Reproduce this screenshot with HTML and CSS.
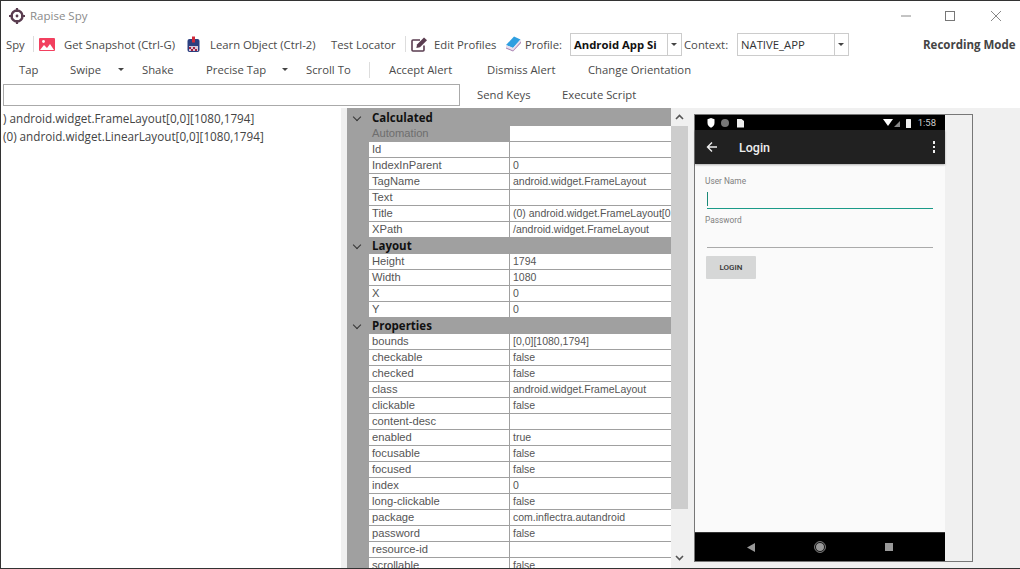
FILE: index.html
```html
<!DOCTYPE html>
<html lang="en">
<head>
    <meta charset="UTF-8">
    <meta name="viewport" content="width=device-width, initial-scale=1.0">
    <title>Rapise Spy</title>
    <link rel="stylesheet" href="styles.css">
</head>
<body>
    <div class="window">
        <div class="titlebar">
            <svg class="logo" width="18" height="18" viewBox="0 0 18 18">
                <circle cx="9" cy="9" r="5.5" fill="none" stroke="#5a3d50" stroke-width="2.4"/>
                <circle cx="9" cy="9" r="1.4" fill="#5a3d50"/>
                <path d="M9 1v4M9 13v4M1 9h4M13 9h4" stroke="#5a3d50" stroke-width="2.2"/>
            </svg>
            <span class="app-name">Rapise Spy</span>
            <div class="win-controls">
                <svg width="12" height="12" viewBox="0 0 12 12"><path d="M1 6h10" stroke="#888"/></svg>
                <svg class="win-max" width="12" height="12" viewBox="0 0 12 12"><rect x="1.5" y="1.5" width="9" height="9" fill="none" stroke="#777"/></svg>
                <svg class="win-close" width="12" height="12" viewBox="0 0 12 12"><path d="M1 1l10 10M11 1L1 11" stroke="#888"/></svg>
            </div>
        </div>

        <!-- Toolbar rows -->
        <div class="toolbar row-one">
            <span class="tb-first">Spy</span>
            <span class="sep sep-a"></span>
            <svg class="ic-snap" width="16" height="13" viewBox="0 0 16 13">
                <rect width="16" height="13" rx="1" fill="#f2405f"/>
                <path d="M1 12l4-5 3 3 3-4 4 6z" fill="#fff"/>
                <circle cx="4.5" cy="3.5" r="1.4" fill="#fff"/>
            </svg>
            <span class="lbl-snap">Get Snapshot (Ctrl-G)</span>
            <svg class="ic-learn" width="13" height="17" viewBox="0 0 13 17">
                <rect x="0.5" y="3" width="12" height="13" rx="2" fill="#2b3f80"/>
                <rect x="2" y="10" width="9" height="5" fill="#d8c8d8"/>
                <path d="M2 11h2v2H2zM6 11h2v2H6zM4 13h2v2H4zM8 13h2v2H8z" fill="#a02040"/>
                <rect x="5" y="0.5" width="3" height="6" fill="#d02a3a"/>
            </svg>
            <span class="lbl-learn">Learn Object (Ctrl-2)</span>
            <span class="lbl-locator">Test Locator</span>
            <span class="sep sep-b"></span>
            <svg class="ic-edit" width="17" height="15" viewBox="0 0 17 15">
                <path d="M13 8.5V13a1 1 0 0 1-1 1H2a1 1 0 0 1-1-1V4a1 1 0 0 1 1-1h7" fill="none" stroke="#5a3d50" stroke-width="1.6"/>
                <path d="M6 7.5l7-7 3 2.8-7 7-3.6.8z" fill="#5a3d50"/>
            </svg>
            <span class="lbl-edit">Edit Profiles</span>
            <svg class="ic-book" width="16" height="16" viewBox="0 0 16 16">
                <path d="M1 9l8-8.500 6.500 3L8 12z" fill="#2f9fe0"/>
                <path d="M1 9l7 3 7.500-8.500.5 2.500-8 9-7-3z" fill="#e8e0ee"/>
                <path d="M1 11.500l7 3 8-9V7l-8 8.500-7-3z" fill="#a880b0"/>
            </svg>
            <span class="lbl-profile">Profile:</span>
            <div class="combo combo-profile"><span class="combo-text">Android App Si</span><span class="combo-drop"></span></div>
            <span class="lbl-context">Context:</span>
            <div class="combo combo-context"><span class="combo-text">NATIVE_APP</span><span class="combo-drop"></span></div>
            <span class="lbl-mode">Recording Mode</span>
        </div>

        <div class="toolbar row-two">
            <span class="t-tap">Tap</span>
            <span class="t-swipe">Swipe</span>
            <span class="caret caret-swipe"></span>
            <span class="t-shake">Shake</span>
            <span class="t-precise">Precise Tap</span>
            <span class="caret caret-precise"></span>
            <span class="t-scroll">Scroll To</span>
            <span class="sep sep-c"></span>
            <span class="t-accept">Accept Alert</span>
            <span class="t-dismiss">Dismiss Alert</span>
            <span class="t-orient">Change Orientation</span>
        </div>

        <div class="toolbar row-three">
            <input class="keys-input" type="text">
            <span class="t-send">Send Keys</span>
            <span class="t-exec">Execute Script</span>
        </div>

        <div class="main">
            <div class="tree">
                <div>) android.widget.FrameLayout[0,0][1080,1794]</div>
                <div>(0) android.widget.LinearLayout[0,0][1080,1794]</div>
            </div>

            <div class="grid-wrap">
                <div class="grid">
                    <div class="group group-first"><span class="chev"></span>Calculated</div>
                    <div class="prop prop-sub"><span class="name">Automation</span><span class="value"></span></div>
                    <div class="prop"><span class="name">Id</span><span class="value"></span></div>
                    <div class="prop"><span class="name">IndexInParent</span><span class="value">0</span></div>
                    <div class="prop"><span class="name">TagName</span><span class="value">android.widget.FrameLayout</span></div>
                    <div class="prop"><span class="name">Text</span><span class="value"></span></div>
                    <div class="prop"><span class="name">Title</span><span class="value">(0) android.widget.FrameLayout[0</span></div>
                    <div class="prop"><span class="name">XPath</span><span class="value">/android.widget.FrameLayout</span></div>
                    <div class="group"><span class="chev"></span>Layout</div>
                    <div class="prop"><span class="name">Height</span><span class="value">1794</span></div>
                    <div class="prop"><span class="name">Width</span><span class="value">1080</span></div>
                    <div class="prop"><span class="name">X</span><span class="value">0</span></div>
                    <div class="prop"><span class="name">Y</span><span class="value">0</span></div>
                    <div class="group"><span class="chev"></span>Properties</div>
                    <div class="prop"><span class="name">bounds</span><span class="value">[0,0][1080,1794]</span></div>
                    <div class="prop"><span class="name">checkable</span><span class="value">false</span></div>
                    <div class="prop"><span class="name">checked</span><span class="value">false</span></div>
                    <div class="prop"><span class="name">class</span><span class="value">android.widget.FrameLayout</span></div>
                    <div class="prop"><span class="name">clickable</span><span class="value">false</span></div>
                    <div class="prop"><span class="name">content-desc</span><span class="value"></span></div>
                    <div class="prop"><span class="name">enabled</span><span class="value">true</span></div>
                    <div class="prop"><span class="name">focusable</span><span class="value">false</span></div>
                    <div class="prop"><span class="name">focused</span><span class="value">false</span></div>
                    <div class="prop"><span class="name">index</span><span class="value">0</span></div>
                    <div class="prop"><span class="name">long-clickable</span><span class="value">false</span></div>
                    <div class="prop"><span class="name">package</span><span class="value">com.inflectra.autandroid</span></div>
                    <div class="prop"><span class="name">password</span><span class="value">false</span></div>
                    <div class="prop"><span class="name">resource-id</span><span class="value"></span></div>
                    <div class="prop"><span class="name">scrollable</span><span class="value">false</span></div>
                </div>
                <div class="scrollbar">
                    <svg class="sb-arrow" width="17" height="18" viewBox="0 0 17 18"><path d="M5 11l3.500-3.500L12 11" fill="none" stroke="#555" stroke-width="1.6"/></svg>
                    <div class="sb-thumb"></div>
                    <svg class="sb-arrow" width="17" height="17" viewBox="0 0 17 17"><path d="M5 7l3.500 3.500L12 7" fill="none" stroke="#555" stroke-width="1.6"/></svg>
                </div>
            </div>

            <div class="preview">
                <div class="phone">
                    <div class="status">
                        <svg width="42" height="10" viewBox="0 0 42 10">
                            <path d="M4 0l3.500 1.200V5c0 2.500-1.800 4-3.500 4.800C2.300 9 .5 7.500.5 5V1.200z" fill="#fff"/>
                            <circle cx="18" cy="5" r="4" fill="#777"/>
                            <path d="M30 1h4.500L37 3v6.500h-7z" fill="#eee"/>
                        </svg>
                        <svg class="status-right" width="30" height="10" viewBox="0 0 30 10">
                            <path d="M0 1h10L5 8z" fill="#fff"/>
                            <path d="M11 9l6-6v6z" fill="#888"/>
                            <rect x="23" y="1" width="5" height="9" rx="0.5" fill="#eee"/>
                        </svg>
                        <span class="clock">1:58</span>
                    </div>
                    <div class="appbar">
                        <svg width="12" height="12" viewBox="0 0 12 12"><path d="M11 6H1.500M6 1.500L1.500 6 6 10.500" fill="none" stroke="#eee" stroke-width="1.400"/></svg>
                        <span class="appbar-title">Login</span>
                        <span class="more"><i></i><i></i><i></i></span>
                    </div>
                    <div class="screen">
                        <div class="field-label">User Name</div>
                        <div class="field field-active"><span class="cursor"></span></div>
                        <div class="field-label">Password</div>
                        <div class="field"></div>
                        <div class="login-btn">LOGIN</div>
                    </div>
                    <div class="navbar">
                        <svg width="8" height="9" viewBox="0 0 8 9"><path d="M8 0v9L0 4.500z" fill="#999"/></svg>
                        <svg width="12" height="12" viewBox="0 0 12 12"><circle cx="6" cy="6" r="5.400" fill="none" stroke="#888"/><circle cx="6" cy="6" r="4" fill="#999"/></svg>
                        <svg width="8" height="8" viewBox="0 0 8 8"><rect width="8" height="8" fill="#999"/></svg>
                    </div>
                </div>
                <div class="phone-rest"></div>
            </div>
        </div>
    </div>
</body>
</html>
```

FILE: styles.css
```css
* {
    box-sizing: border-box;
}
html, body {
    margin: 0;
    height: 100%;
    overflow: hidden;
}
body {
    font-family: "Open Sans", "Liberation Sans", sans-serif;
    font-size: 11.3px;
    color: #4a4a4a;
    background: #fff;
}
.window {
    width: 1020px;
    height: 569px;
    border: 1px solid #333;
    border-right: none;
    display: flex;
    flex-direction: column;
    overflow: hidden;
    background: #fff;
}

/* title bar */
.titlebar {
    height: 29px;
    flex: none;
    display: flex;
    align-items: center;
    padding: 0 0 0 7px;
}
.app-name {
    margin-left: 4px;
    color: #8a8a8a;
    font-size: 11.5px;
}
.win-controls {
    margin-left: auto;
    display: flex;
    align-items: center;
    padding-right: 18px;
}
.win-max {
    margin-left: 32px;
}
.win-close {
    margin-left: 34px;
}

/* toolbar */
.toolbar {
    flex: none;
    display: flex;
    align-items: center;
    white-space: nowrap;
}
.row-one {
    height: 28px;
}
.row-two {
    height: 23px;
}
.row-three {
    height: 27px;
}
.sep {
    width: 1px;
    height: 16px;
    background: #ddd;
}
.tb-first { margin-left: 5px; width: 19px; }
.sep-a { margin-left: 8px; }
.ic-snap { margin-left: 5px; }
.lbl-snap { margin-left: 9px; width: 111px; }
.ic-learn { margin-left: 12px; }
.lbl-learn { margin-left: 10px; width: 107px; }
.lbl-locator { margin-left: 14px; width: 65px; }
.sep-b { margin-left: 9px; }
.ic-edit { margin-left: 5px; }
.lbl-edit { margin-left: 6px; width: 62px; }
.ic-book { margin-left: 9px; }
.lbl-profile { margin-left: 4px; width: 36px; }
.combo {
    height: 23px;
    border: 1px solid #ccc;
    display: flex;
    align-items: center;
    width: 112px;
    background: #fff;
}
.combo-profile {
    margin-left: 9px;
    color: #111;
    font-weight: 700;
}
.combo-text {
    flex: 1;
    padding-left: 3px;
    overflow: hidden;
}
.combo-context .combo-text {
    color: #333;
}
.combo-drop {
    width: 14px;
    height: 100%;
    border-left: 1px solid #ccc;
    position: relative;
}
.combo-drop::after, .caret::after {
    content: "";
    position: absolute;
    left: 3px;
    top: 9px;
    border: 3px solid transparent;
    border-top: 3px solid #444;
    border-bottom: none;
}
.lbl-context { margin-left: 2px; width: 44px; }
.combo-context { margin-left: 9px; }
.lbl-mode {
    margin-left: 74px;
    font-size: 11.5px;
    font-weight: 700;
    color: #444;
}
.caret {
    position: relative;
    width: 8px;
    height: 16px;
}
.caret::after {
    left: 0;
    top: 6px;
}
.t-tap { margin-left: 18px; width: 19px; }
.t-swipe { margin-left: 32px; width: 31px; }
.caret-swipe { margin-left: 17px; }
.t-shake { margin-left: 16px; width: 31px; }
.t-precise { margin-left: 33px; width: 59px; }
.caret-precise { margin-left: 17px; }
.t-scroll { margin-left: 16px; width: 45px; }
.sep-c { margin-left: 18px; }
.t-accept { margin-left: 19px; width: 65px; }
.t-dismiss { margin-left: 33px; width: 67px; }
.t-orient { margin-left: 34px; }
.keys-input {
    margin-left: 2px;
    width: 457px;
    height: 22px;
    border: 1px solid #aaa;
    padding: 0;
    background: #fff;
}
.t-send { margin-left: 17px; width: 53px; }
.t-exec { margin-left: 32px; }

/* main area */
.main {
    flex: 1;
    min-height: 0;
    display: flex;
    background: #f0f0f0;
}
.tree {
    width: 340px;
    flex: none;
    background: #fff;
    padding: 1px 0 0 2px;
    color: #444;
    font-size: 11.7px;
    line-height: 18px;
    white-space: nowrap;
    overflow: hidden;
}
.grid-wrap {
    margin-left: 6px;
    width: 341px;
    flex: none;
    display: flex;
    overflow: hidden;
}
.grid {
    width: 324px;
    flex: none;
    background: #a0a0a0;
    font-family: "Liberation Sans", Arial, sans-serif;
    font-size: 11.2px;
}
.group {
    height: 16px;
    padding-left: 25px;
    color: #111;
    font-family: "Open Sans", "Liberation Sans", sans-serif;
    font-size: 11.5px;
    font-weight: 700;
    line-height: 16px;
    position: relative;
}
.group-first {
    height: 18px;
    padding-top: 2px;
}
.chev {
    position: absolute;
    left: 7px;
    top: 4px;
    width: 6px;
    height: 6px;
    border-right: 1.5px solid #333;
    border-bottom: 1.5px solid #333;
    transform: rotate(45deg);
}
.group-first .chev {
    top: 6px;
}
.prop {
    height: 16px;
    display: flex;
    margin-left: 22px;
    line-height: 15px;
    color: #555;
}
.name {
    width: 141px;
    flex: none;
    padding-left: 3px;
    background: #fff;
    border-bottom: 1px solid #a0a0a0;
    border-right: 1px solid #a0a0a0;
    overflow: hidden;
    white-space: nowrap;
}
.value {
    flex: 1;
    min-width: 0;
    padding-left: 3px;
    background: #fff;
    border-bottom: 1px solid #a0a0a0;
    font-size: 10.5px;
    overflow: hidden;
    white-space: nowrap;
}
.prop-sub .name {
    background: #a0a0a0;
    color: #6e6e6e;
}
.scrollbar {
    width: 17px;
    flex: none;
    display: flex;
    flex-direction: column;
    background: #f0f0f0;
}
.sb-arrow {
    flex: none;
}
.sb-thumb {
    height: 383px;
    background: #cdcdcd;
}
.sb-thumb + .sb-arrow {
    margin-top: auto;
    margin-bottom: 2px;
}

/* device preview */
.preview {
    margin: 6px 0 6px 6px;
    width: 279px;
    flex: none;
    border: 1px solid #777;
    display: flex;
    background: #f0f0f0;
}
.phone {
    width: 250px;
    flex: none;
    display: flex;
    flex-direction: column;
    font-family: Roboto, sans-serif;
    background: #fafafa;
}
.phone-rest {
    flex: 1;
}
.status {
    height: 15px;
    flex: none;
    background: #000;
    display: flex;
    align-items: center;
    padding: 0 9px 0 12px;
}
.status-right {
    margin-left: auto;
}
.clock {
    margin-left: 5px;
    color: #ccc;
    font-size: 9.5px;
}
.appbar {
    height: 34px;
    flex: none;
    background: #212121;
    display: flex;
    align-items: center;
    padding: 0 10px 0 11px;
    box-shadow: 0 1px 2px rgba(0,0,0,0.3);
}
.appbar-title {
    margin-left: 21px;
    color: #eee;
    font-size: 12.5px;
    font-weight: 500;
}
.more {
    margin-left: auto;
    display: flex;
    flex-direction: column;
    gap: 2px;
}
.more i {
    width: 2.500px;
    height: 2.500px;
    background: #eee;
    display: block;
}
.screen {
    flex: 1;
    padding: 12px 12px 0 10px;
}
.field-label {
    font-size: 8.3px;
    line-height: 10px;
    color: #808080;
}
.field {
    margin: 3px 0 6px 2px;
    height: 20px;
    border-bottom: 1px solid #aaa;
}
.field-active {
    border-bottom: 1px solid #1a9a88;
    position: relative;
}
.cursor {
    position: absolute;
    left: 0;
    top: 3px;
    width: 1px;
    height: 14px;
    background: #1a8a78;
}
.login-btn {
    margin: 8px 0 0 1px;
    width: 50px;
    height: 23px;
    background: #d6d7d7;
    border-radius: 1px;
    color: #333;
    font-size: 8px;
    font-weight: 500;
    line-height: 23px;
    text-align: center;
}
.navbar {
    height: 29px;
    flex: none;
    background: #000;
    border-top: 1px solid #333;
    display: flex;
    align-items: center;
    justify-content: space-between;
    padding: 0 52px;
}
```
